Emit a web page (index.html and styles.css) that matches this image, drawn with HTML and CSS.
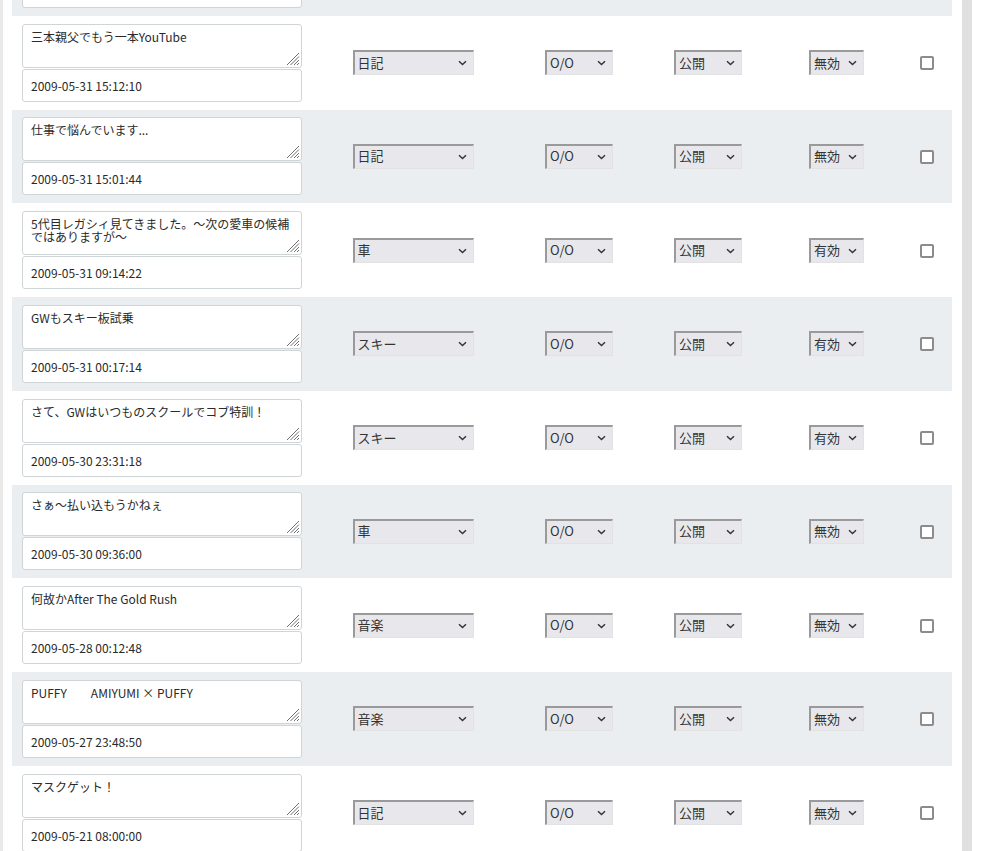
FILE: index.html
```html
<!DOCTYPE html>
<html lang="ja">
<head>
    <meta charset="UTF-8">
    <title>記事一覧</title>
    <link rel="stylesheet" href="styles.css">
</head>
<body>

<div class="page">
    <div class="entry-list">
        <!-- rows are generated by script.js -->
    </div>
</div>

<script src="script.js"></script>
</body>
</html>
```

FILE: styles.css
```css
body {
    margin: 0;
    background: #ffffff;
    font-family: "Noto Sans CJK JP", "Noto Sans", sans-serif;
    color: #222;
}

.page {
    width: 940px;
    padding: 0 10px 0 9px;
    border-left: 3px solid #e9e9e9;
    border-right: 10px solid #e0e0e0;
    min-height: 851px;
    overflow: hidden;
}

/* list is scrolled: first row only partly visible */
.entry-list {
    margin-top: -78px;
}

.entry {
    display: grid;
    grid-template-columns: 300px 202px 130px 128px 129px 51px;
    align-items: center;
    height: 93.75px;
    box-sizing: border-box;
}

.entry:nth-child(odd) {
    background-color: #ebeef0;
}

.entry-title {
    display: flex;
    flex-direction: column;
    gap: 1px;
    padding-left: 10px;
}

.subject-wrap {
    position: relative;
    width: 280px;
    height: 44px;
}

.subject {
    width: 280px;
    height: 44px;
    box-sizing: border-box;
    margin: 0;
    padding: 5px 8px;
    border: 1px solid #cfd4d6;
    border-radius: 3px;
    font-family: inherit;
    font-size: 12px;
    line-height: 13px;
    color: #2a2a2a;
    background: #fff;
    resize: none;
    overflow: hidden;
    display: block;
}

.grip {
    position: absolute;
    right: 2px;
    bottom: 2px;
    width: 14px;
    height: 14px;
}

.posted {
    width: 280px;
    height: 33px;
    box-sizing: border-box;
    padding: 0 8px;
    border: 1px solid #cfd4d6;
    border-radius: 3px;
    background: #fff;
    font-size: 12px;
    line-height: 31px;
    color: #2a2a2a;
}

.cell {
    display: flex;
    justify-content: center;
    align-items: center;
}

.select-wrap {
    position: relative;
    display: inline-block;
}

select {
    -webkit-appearance: none;
    appearance: none;
    display: block;
    height: 25px;
    box-sizing: border-box;
    padding: 0 0 2px 3px;
    margin: 0;
    font-family: inherit;
    font-size: 13px;
    color: #333;
    background-color: #e8e8ec;
    border-top: 2px solid #9a9a9a;
    border-left: 2px solid #9a9a9a;
    border-right: 1px solid #e2e2e2;
    border-bottom: 1px solid #e2e2e2;
    border-radius: 0;
}

.chevron {
    position: absolute;
    right: 7px;
    top: 10px;
    width: 9px;
    height: 6px;
    pointer-events: none;
}

.sel-cat {
    width: 121px;
}

.sel-sm {
    width: 68px;
}

.sel-xs {
    width: 55px;
}

.check {
    -webkit-appearance: none;
    appearance: none;
    width: 14px;
    height: 14px;
    margin: 1px 0 0 0;
    box-sizing: border-box;
    border: 2px solid #8c8c8c;
    border-radius: 2px;
    background: #fff;
}
```

FILE: script.js
```js
// entries shown in the list (first one is scrolled out of view)
const entries = [
    { title: '', date: '', cat: '日記', open: '公開', state: '無効' },
    { title: '三本親父でもう一本YouTube', date: '2009-05-31 15:12:10', cat: '日記', open: '公開', state: '無効' },
    { title: '仕事で悩んでいます...', date: '2009-05-31 15:01:44', cat: '日記', open: '公開', state: '無効' },
    { title: '5代目レガシィ見てきました。～次の愛車の候補ではありますが～', date: '2009-05-31 09:14:22', cat: '車', open: '公開', state: '有効' },
    { title: 'GWもスキー板試乗', date: '2009-05-31 00:17:14', cat: 'スキー', open: '公開', state: '有効' },
    { title: 'さて、GWはいつものスクールでコブ特訓！', date: '2009-05-30 23:31:18', cat: 'スキー', open: '公開', state: '有効' },
    { title: 'さぁ～払い込もうかねぇ', date: '2009-05-30 09:36:00', cat: '車', open: '公開', state: '無効' },
    { title: '何故かAfter The Gold Rush', date: '2009-05-28 00:12:48', cat: '音楽', open: '公開', state: '無効' },
    { title: 'PUFFY　　AMIYUMI × PUFFY', date: '2009-05-27 23:48:50', cat: '音楽', open: '公開', state: '無効' },
    { title: 'マスクゲット！', date: '2009-05-21 08:00:00', cat: '日記', open: '公開', state: '無効' }
];

const chevron = '<svg class="chevron" viewBox="0 0 9 6"><path d="M1 1.2 L4.5 4.6 L8 1.2" fill="none" stroke="#333" stroke-width="1.4"/></svg>';
const grip = '<svg class="grip" viewBox="0 0 14 14">' +
    '<path d="M13 1 L1 13 M13 4.5 L4.5 13 M13 8 L8 13 M13 11 L11 13" stroke="#6f6f6f" stroke-width="1"/>' +
    '</svg>';

function selectBox(cls, value) {
    return '<div class="cell"><span class="select-wrap"><select class="' + cls + '"><option>' +
        value + '</option></select>' + chevron + '</span></div>';
}

const list = document.querySelector('.entry-list');
entries.forEach(e => {
    const row = document.createElement('div');
    row.className = 'entry';
    row.innerHTML =
        '<div class="entry-title">' +
            '<div class="subject-wrap"><textarea class="subject">' + e.title + '</textarea>' + grip + '</div>' +
            '<div class="posted">' + e.date + '</div>' +
        '</div>' +
        selectBox('sel-cat', e.cat) +
        selectBox('sel-sm', 'O/O') +
        selectBox('sel-sm', e.open) +
        selectBox('sel-xs', e.state) +
        '<div class="cell"><input type="checkbox" class="check"></div>';
    list.appendChild(row);
});
```
